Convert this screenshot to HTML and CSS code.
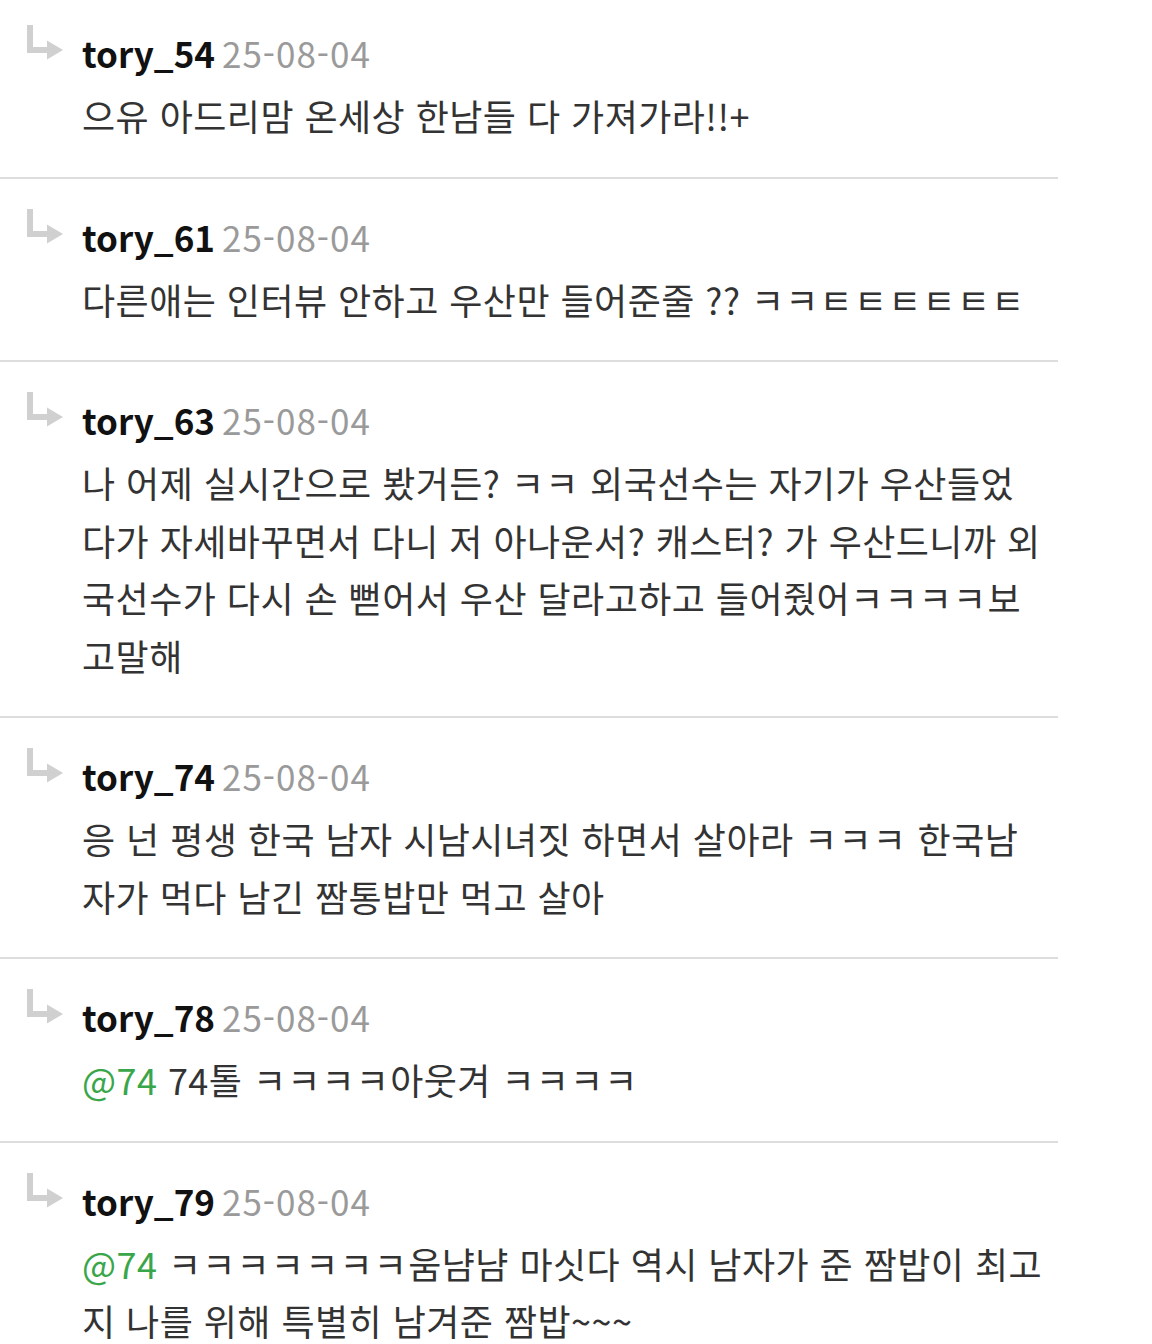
FILE: index.html
```html
<!DOCTYPE html>
<html lang="ko">
<head>
<meta charset="utf-8">
<link rel="stylesheet" href="styles.css">
</head>
<body>
<ul class="comments">
  <li class="comment">
    <svg class="reply-icon" viewBox="0 0 40 40" width="40" height="40"><path d="M2 1h6v22h14v-6.5l16 9.5l-16 9.5v-6.5h-20z"/></svg>
    <div class="body">
      <div class="head"><span class="user">tory_54</span><span class="date">25-08-04</span></div>
      <p class="text">으유 아드리맘 온세상 한남들 다 가져가라!!+</p>
    </div>
  </li>
  <li class="comment">
    <svg class="reply-icon" viewBox="0 0 40 40" width="40" height="40"><path d="M2 1h6v22h14v-6.5l16 9.5l-16 9.5v-6.5h-20z"/></svg>
    <div class="body">
      <div class="head"><span class="user">tory_61</span><span class="date">25-08-04</span></div>
      <p class="text">다른애는 인터뷰 안하고 우산만 들어준줄 ?? <span class="jamo">ㅋㅋㅌㅌㅌㅌㅌㅌ</span></p>
    </div>
  </li>
  <li class="comment">
    <svg class="reply-icon" viewBox="0 0 40 40" width="40" height="40"><path d="M2 1h6v22h14v-6.5l16 9.5l-16 9.5v-6.5h-20z"/></svg>
    <div class="body">
      <div class="head"><span class="user">tory_63</span><span class="date">25-08-04</span></div>
      <p class="text">나 어제 실시간으로 봤거든? <span class="jamo">ㅋㅋ</span> 외국선수는 자기가 우산들었다가 자세바꾸면서 다니 저 아나운서? 캐스터? 가 우산드니까 외국선수가 다시 손 뻗어서 우산 달라고하고 들어줬어<span class="jamo">ㅋㅋㅋㅋ</span>보고말해</p>
    </div>
  </li>
  <li class="comment">
    <svg class="reply-icon" viewBox="0 0 40 40" width="40" height="40"><path d="M2 1h6v22h14v-6.5l16 9.5l-16 9.5v-6.5h-20z"/></svg>
    <div class="body">
      <div class="head"><span class="user">tory_74</span><span class="date">25-08-04</span></div>
      <p class="text">응 넌 평생 한국 남자 시남시녀짓 하면서 살아라 <span class="jamo">ㅋㅋㅋ</span> 한국남자가 먹다 남긴 짬통밥만 먹고 살아</p>
    </div>
  </li>
  <li class="comment">
    <svg class="reply-icon" viewBox="0 0 40 40" width="40" height="40"><path d="M2 1h6v22h14v-6.5l16 9.5l-16 9.5v-6.5h-20z"/></svg>
    <div class="body">
      <div class="head"><span class="user">tory_78</span><span class="date">25-08-04</span></div>
      <p class="text"><span class="mention">@74</span> 74톨 <span class="jamo">ㅋㅋㅋㅋ</span>아웃겨 <span class="jamo">ㅋㅋㅋㅋ</span></p>
    </div>
  </li>
  <li class="comment">
    <svg class="reply-icon" viewBox="0 0 40 40" width="40" height="40"><path d="M2 1h6v22h14v-6.5l16 9.5l-16 9.5v-6.5h-20z"/></svg>
    <div class="body">
      <div class="head"><span class="user">tory_79</span><span class="date">25-08-04</span></div>
      <p class="text"><span class="mention">@74</span> <span class="jamo">ㅋㅋㅋㅋㅋㅋㅋ</span>움냠냠 마싯다 역시 남자가 준 짬밥이 최고지 나를 위해 특별히 남겨준 짬밥~~~</p>
    </div>
  </li>
</ul>
</body>
</html>
```

FILE: styles.css
```css
html, body {
  margin: 0;
  padding: 0;
  background: #ffffff;
}

body {
  font-family: "Noto Sans CJK KR", "Noto Sans", sans-serif;
  color: #333333;
  overflow: hidden;
}

.comments {
  list-style: none;
  margin: 0;
  padding: 0;
  width: 1058px;
}

.comment {
  display: flex;
  align-items: flex-start;
  padding: 35px 0 32px 0;
  border-bottom: 2px solid #dddddd;
}

.comment:first-child {
  margin-top: -5px;
}

.reply-icon {
  flex: none;
  fill: #d0d0d0;
  margin: -6px 17px 0 25px;
}

.body {
  flex: 1;
  min-width: 0;
  padding-right: 14px;
}

.head {
  display: flex;
  align-items: baseline;
  gap: 7px;
  height: 46px;
  line-height: 46px;
  font-size: 35px;
}

.user {
  font-weight: 700;
  color: #111111;
}

.date {
  color: #9a9a9a;
  font-weight: 400;
  letter-spacing: 1px;
}

.text {
  margin: 11px 0 0 0;
  font-size: 36px;
  line-height: 57.5px;
  letter-spacing: 0.45px;
  word-break: break-all;
}

.jamo {
  letter-spacing: 1.2px;
}

.mention {
  color: #3aa64a;
}
```
